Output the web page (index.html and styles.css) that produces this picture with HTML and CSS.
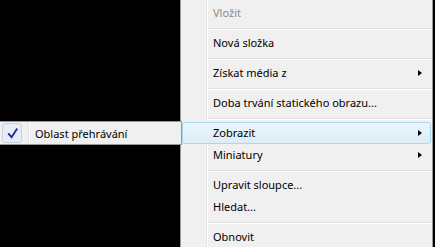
FILE: index.html
```html
<!DOCTYPE html>
<html>
<head>
<meta charset="utf-8">
<link rel="stylesheet" href="styles.css">
</head>
<body>
<div class="menu">
  <div class="item disabled"><span>Vložit</span></div>
  <div class="sep"></div>
  <div class="item"><span>Nová složka</span></div>
  <div class="sep"></div>
  <div class="item"><span>Získat média z</span><i class="arrow"></i></div>
  <div class="sep"></div>
  <div class="item"><span>Doba trvání statického obrazu...</span></div>
  <div class="sep"></div>
  <div class="item hover"><span>Zobrazit</span><i class="arrow"></i></div>
  <div class="item"><span>Miniatury</span><i class="arrow"></i></div>
  <div class="sep"></div>
  <div class="item"><span>Upravit sloupce...</span></div>
  <div class="item"><span>Hledat...</span></div>
  <div class="sep"></div>
  <div class="item"><span>Obnovit</span></div>
</div>
<div class="submenu">
  <div class="subitem">
    <span class="checkbox">
      <svg width="20" height="20" viewBox="0 0 20 20"><path d="M6.2 10.3 L9.6 14.2 L15.2 5.6" fill="none" stroke="#1f2d9c" stroke-width="1.9" stroke-linejoin="miter" stroke-linecap="butt"/></svg>
    </span>
    <span class="subtext">Oblast přehrávání</span>
  </div>
</div>
</body>
</html>
```
FILE: styles.css
```css
html, body {
  margin: 0;
  padding: 0;
  background: #000;
  width: 435px;
  height: 247px;
  overflow: hidden;
  font-family: "Noto Sans", "Open Sans", sans-serif;
  font-size: 11px;
  color: #000;
}

.menu {
  margin-left: 180px;
  width: 251px;
  border: 1px solid #979797;
  border-top: none;
  border-bottom: none;
  padding-top: 2px;
  height: 247px;
  box-sizing: border-box;
  overflow: hidden;
  background:
    linear-gradient(to right,
      transparent 25px, #e2e3e3 25px, #e2e3e3 26px,
      #ffffff 26px, #ffffff 27px, transparent 27px),
    #f0f0f0;
}

.menu {
  width: 253px;
}

.item {
  height: 22px;
  margin: 0 1px;
  padding-left: 31px;
  padding-right: 9px;
  display: flex;
  align-items: center;
  justify-content: space-between;
  box-sizing: border-box;
  line-height: 22px;
}

.item.disabled {
  color: #8b8b8b;
}

.item.hover {
  border: 1px solid #a8d8eb;
  border-radius: 3px;
  padding-left: 30px;
  padding-right: 8px;
  background: linear-gradient(to bottom, #eaf5fb, #dcedf6);
}

.arrow {
  width: 0;
  height: 0;
  border-top: 3.5px solid transparent;
  border-bottom: 3.5px solid transparent;
  border-left: 4px solid #000;
}

.sep {
  height: 8px;
  margin-left: 27px;
  background: linear-gradient(to bottom,
    transparent 4px, #e0e0e0 4px, #e0e0e0 5px,
    #ffffff 5px, #ffffff 6px, transparent 6px);
}

.submenu {
  position: absolute;
  left: 0;
  top: 121px;
  width: 181px;
  border: 1px solid #979797;
  border-left: none;
  background:
    linear-gradient(to right,
      transparent 28px, #e2e3e3 28px, #e2e3e3 29px,
      #ffffff 29px, #ffffff 30px, transparent 30px),
    #f0f0f0;
}

.subitem {
  height: 22px;
  display: flex;
  align-items: center;
}

.checkbox {
  width: 18px;
  height: 18px;
  margin-left: 2px;
  border: 1px solid #c9d3e3;
  border-radius: 3px;
  background: #e6edf7;
  position: relative;
}

.checkbox svg {
  position: absolute;
  left: -1px;
  top: -1px;
}

.subtext {
  margin-left: 13px;
}
```
